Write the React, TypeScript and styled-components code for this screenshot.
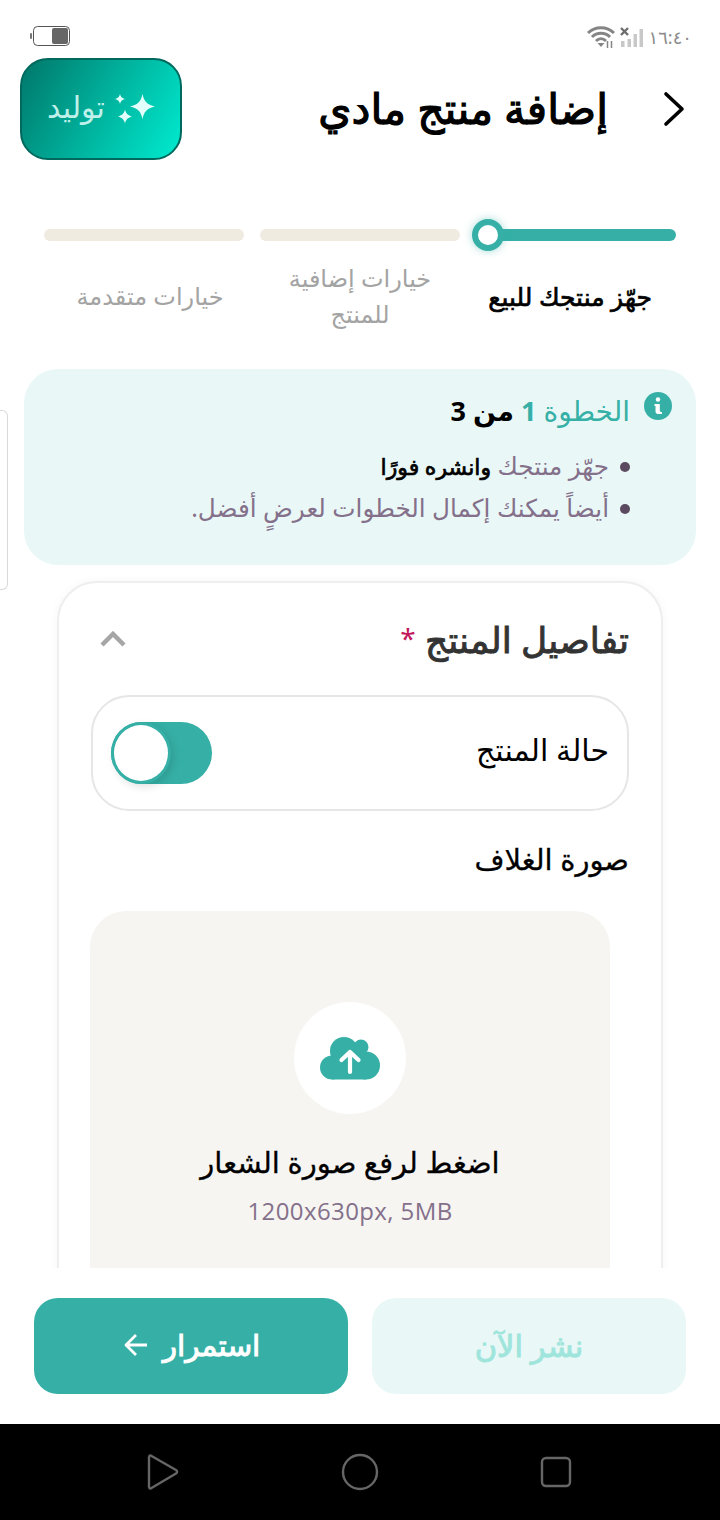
import React from 'react';
import styled, { createGlobalStyle, css } from 'styled-components';

const TEAL = '#36b0a6';
const AR_FONT = `"Noto Sans", "DejaVu Sans", sans-serif`;

// the Arabic bold face runs wide, so heavy text is the regular face with a stroke
const heavy = (stroke: number) => css`
  font-weight: 400;
  -webkit-text-stroke: ${stroke}px currentColor;
`;

const GlobalStyle = createGlobalStyle`
  html, body { margin: 0; padding: 0; background: #fff; }
  * { box-sizing: border-box; }
`;

const Screen = styled.div`
  position: relative;
  width: 720px;
  height: 1520px;
  display: flex;
  flex-direction: column;
  overflow: hidden;
  background: #fff;
  font-family: ${AR_FONT};
  color: #000;
`;

/* status bar */
const StatusBar = styled.div`
  direction: ltr;
  height: 58px;
  flex: none;
  display: flex;
  justify-content: space-between;
  align-items: flex-start;
  padding: 24px 28px 0 30px;
`;

const BatteryWrap = styled.div`
  margin-top: 2px;
  display: flex;
`;

const StatusRight = styled.div`
  display: flex;
  align-items: center;
  height: 26px;
  gap: 5px;
  color: #8c8c8c;
  font-size: 18px;
`;

/* header */
const Header = styled.header`
  flex: none;
  height: 102px;
  display: flex;
  align-items: center;
  padding: 0 34px 0 20px;
`;

const BackButton = styled.button`
  border: 0;
  background: none;
  padding: 0;
  width: 24px;
  height: 36px;
  margin-left: 54px;
  display: flex;
`;

const Title = styled.h1`
  margin: 0 0 2px;
  flex: 1;
  font-size: 42.500px;
  line-height: 50px;
  ${heavy(1.2)}
`;

const GenerateButton = styled.button`
  width: 162px;
  height: 102px;
  border-radius: 28px;
  border: 2px solid #00695e;
  background: linear-gradient(120deg, #00776a 0%, #00b8a2 55%, #00ebd0 100%);
  color: #bff0ea;
  font-family: ${AR_FONT};
  font-size: 30px;
  display: flex;
  align-items: center;
  justify-content: center;
  gap: 10px;
  padding: 0;

  span {
    padding-bottom: 6px;
  }
`;

/* stepper */
const Stepper = styled.div`
  flex: none;
  padding-top: 69px;
`;

const Tracks = styled.div`
  display: grid;
  grid-template-columns: repeat(3, 200px);
  column-gap: 16px;
  justify-content: center;
`;

const Track = styled.div<{ $active?: boolean }>`
  position: relative;
  height: 12px;
  border-radius: 6px;
  background: ${p => (p.$active ? TEAL : '#f0ebe1')};
`;

const Knob = styled.span`
  position: absolute;
  left: -4px;
  top: -10px;
  width: 32px;
  height: 32px;
  border-radius: 50%;
  background: #fff;
  border: 6px solid ${TEAL};
  box-shadow: 0 0 8px rgba(54, 176, 166, 0.45);
`;

const StepLabels = styled.div`
  display: grid;
  grid-template-columns: repeat(3, 210px);
  justify-content: center;
`;

const StepLabel = styled.div<{ $active?: boolean }>`
  height: 110px;
  display: flex;
  align-items: center;
  justify-content: center;
  text-align: center;
  font-size: ${p => (p.$active ? 25 : 24)}px;
  line-height: 36px;
  padding: 0 20px;
  color: ${p => (p.$active ? '#000' : '#a3a3a3')};
  white-space: ${p => (p.$active ? 'nowrap' : 'normal')};
  ${p => p.$active && heavy(0.7)}
`;

/* scrolling content */
const Content = styled.main`
  flex: 1;
  min-height: 0;
  overflow: hidden;
  padding: 18px 24px 0;
`;

const InfoBox = styled.section`
  height: 196px;
  border-radius: 34px;
  background: #e9f8f7;
  padding: 18px 24px 0;
`;

const InfoHeading = styled.div`
  display: flex;
  align-items: flex-start;
  gap: 14px;
  font-size: 27px;
  line-height: 46px;
  font-weight: 700;
`;

const InfoIcon = styled.span`
  width: 28px;
  height: 28px;
  flex: none;
  border-radius: 50%;
  background: ${TEAL};
  color: #fff;
  display: flex;
  align-items: center;
  justify-content: center;
  margin-top: 5px;
`;

const StepWord = styled.span`
  color: ${TEAL};
  font-size: 28px;
  font-weight: 400;
`;

const StepNumber = styled.span`
  color: ${TEAL};
`;

const BulletList = styled.ul`
  list-style: none;
  margin: 11px 0 0;
  padding: 0 63px 0 0;
  font-size: 24.700px;
  line-height: 42px;
  color: #84708a;
`;

const Bullet = styled.li`
  position: relative;
  height: 42px;
  white-space: nowrap;

  &::before {
    content: '';
    position: absolute;
    right: -21px;
    top: 17px;
    width: 10px;
    height: 10px;
    border-radius: 50%;
    background: #5c4b60;
  }

  b {
    color: #000;
    font-size: 22px;
    ${heavy(0.7)}
  }
`;

const Card = styled.section`
  margin: 16px 33px 0;
  height: 800px;
  border: 2px solid #eeeeee;
  border-radius: 40px;
  background: #fff;
  box-shadow: 0 0 10px rgba(0, 0, 0, 0.04);
  padding: 28px 32px 0 32px;
`;

const CardHead = styled.div`
  display: flex;
  align-items: center;
  justify-content: space-between;
  height: 56px;
  padding-left: 9px;
`;

const CardTitle = styled.h2`
  margin: 0;
  font-size: 36px;
  color: #333;
  line-height: 56px;
  ${heavy(0.9)}

  i {
    font-style: normal;
    font-size: 28px;
    vertical-align: 4px;
    color: #c2185b;
    -webkit-text-stroke: 0;
  }
`;

const StatusRow = styled.div`
  margin-top: 28px;
  height: 116px;
  border: 2px solid #e6e6e6;
  border-radius: 38px;
  display: flex;
  align-items: center;
  justify-content: space-between;
  padding: 0 18px 0 18px;
  font-size: 30px;

  > span {
    padding-bottom: 7px;
  }
`;

const Toggle = styled.div`
  position: relative;
  width: 101px;
  height: 62px;
  border-radius: 31px;
  background: ${TEAL};
`;

const ToggleThumb = styled.span`
  position: absolute;
  left: 0;
  top: 0;
  width: 60px;
  height: 62px;
  border-radius: 50%;
  background: #fff;
  border: 3px solid ${TEAL};
  box-shadow: 3px 3px 8px rgba(0, 0, 0, 0.12);
`;

const FieldLabel = styled.div`
  margin-top: 23px;
  font-size: 29px;
  line-height: 50px;
  -webkit-text-stroke: 0.3px #000;
`;

const Upload = styled.div`
  margin: 27px 19px 0 -1px;
  height: 420px;
  border-radius: 36px;
  background: #f6f5f2;
  display: flex;
  flex-direction: column;
  align-items: center;
  padding-top: 91px;
`;

const UploadCircle = styled.div`
  width: 112px;
  height: 112px;
  border-radius: 50%;
  background: #fff;
  display: flex;
  align-items: center;
  justify-content: center;
`;

const UploadTitle = styled.div`
  margin-top: 23px;
  margin-bottom: 1px;
  font-size: 29px;
  line-height: 50px;
  -webkit-text-stroke: 0.3px #000;
`;

const UploadHint = styled.div`
  direction: ltr;
  font-size: 24px;
  line-height: 46px;
  letter-spacing: 0.4px;
  color: #84708a;
  font-family: "Open Sans", "Noto Sans", sans-serif;
`;

/* sliver of a side tab at the edge of the screen */
const SideTab = styled.div`
  position: absolute;
  left: 0;
  top: 410px;
  width: 8px;
  height: 180px;
  border: 1px solid #d9d9d9;
  border-left: 0;
  border-radius: 0 6px 6px 0;
  background: #fff;
`;

/* footer actions */
const Footer = styled.footer`
  flex: none;
  height: 156px;
  background: #fff;
  display: grid;
  grid-template-columns: 314px 314px;
  column-gap: 24px;
  justify-content: center;
  padding-top: 30px;
`;

const ActionButton = styled.button<{ $primary?: boolean }>`
  height: 96px;
  border: 0;
  border-radius: 24px;
  font-family: ${AR_FONT};
  font-size: ${p => (p.$primary ? 29.5 : 30.5)}px;
  display: flex;
  align-items: center;
  justify-content: center;
  gap: 15px;
  padding: 0 0 3px ${p => (p.$primary ? 2 : 0)}px;
  background: ${p => (p.$primary ? TEAL : '#e9f8f7')};
  color: ${p => (p.$primary ? '#fff' : '#a0e5dc')};
  ${heavy(1)}
`;

/* android nav bar */
const NavBar = styled.nav`
  flex: none;
  direction: ltr;
  height: 96px;
  background: #000;
  display: flex;
  justify-content: space-between;
  align-items: center;
  padding: 0 148px 0 147px;
`;

const Battery = () => (
  <svg width="40" height="20" viewBox="0 0 40 20">
    <rect x="0" y="7" width="2" height="6" rx="1" fill="#777" />
    <rect x="3.500" y="0.500" width="36" height="19" rx="4" fill="#fff" stroke="#555" />
    <rect x="22" y="2" width="16" height="16" rx="2" fill="#666" />
  </svg>
);

const Wifi = () => (
  <svg width="28" height="22" viewBox="0 0 28 22" fill="none" stroke="#858585" strokeWidth="3">
    <path d="M1 7 C8 0 20 0 27 7" />
    <path d="M5 11 C10 6 18 6 23 11" />
    <path d="M9 15 C12 12 16 12 19 15" />
    <path d="M10.500 17 L14 21 L17.500 17 Z" fill="#858585" stroke="none" />
    <path d="M20.500 15 V22 M24.500 15 V22" strokeWidth="1.500" />
  </svg>
);

const Signal = () => (
  <svg width="24" height="20" viewBox="0 0 24 20" fill="#c8c8c8">
    <path d="M1 1 L8 8 M8 1 L1 8" stroke="#6e6e6e" strokeWidth="2.400" />
    <rect x="1" y="14" width="3.500" height="6" />
    <rect x="7.500" y="12" width="3.500" height="8" />
    <rect x="13.500" y="7" width="3.500" height="13" />
    <rect x="19.500" y="2" width="3.500" height="18" />
  </svg>
);

const Sparkles = () => (
  <svg width="40" height="30" viewBox="0 0 40 30" fill="#e2fffb">
    <path d="M27.500 0 C29 7.500 32 10.500 40 12.500 C32 14.500 29 17.500 27.500 25 C26 17.500 23 14.500 15 12.500 C23 10.500 26 7.500 27.500 0 Z" />
    <path d="M5 0 C5.500 2.700 7 4.300 10 5 C7 5.700 5.500 7.300 5 10 C4.500 7.300 3 5.700 0 5 C3 4.300 4.500 2.700 5 0 Z" />
    <path d="M10 15.500 C11 19.500 12.500 21 17 22.500 C12.500 24 11 25.500 10 29.500 C9 25.500 7.500 24 3 22.500 C7.500 21 9 19.500 10 15.500 Z" />
  </svg>
);

const BackChevron = () => (
  <svg width="24" height="36" viewBox="0 0 24 36" fill="none" stroke="#000" strokeWidth="3.600">
    <path d="M4 3 L20 18 L4 33" strokeLinecap="round" strokeLinejoin="round" />
  </svg>
);

const CollapseChevron = () => (
  <svg width="26" height="16" viewBox="0 0 26 16" fill="none" stroke="#a6a6a6" strokeWidth="4.500">
    <path d="M2 14 L13 3 L24 14" />
  </svg>
);

const InfoGlyph = () => (
  <svg width="10" height="18" viewBox="0 0 10 18" fill="#fff">
    <circle cx="5" cy="2.500" r="2.200" />
    <path d="M1.500 7 H6.800 V13 C6.800 14.500 7.500 15 9 15 V17 H5 C3.300 17 2.500 15.800 2.500 14 V9 H1.500 Z" />
  </svg>
);

const CloudUpload = () => (
  <svg width="60" height="43" viewBox="0 0 60 43">
    <g fill={TEAL}>
      <circle cx="12" cy="30.500" r="12" />
      <circle cx="24" cy="14" r="14" />
      <circle cx="41" cy="10" r="7.500" />
      <circle cx="46" cy="28.500" r="14" />
      <rect x="12" y="12" width="34" height="30.500" />
    </g>
    <path
      d="M30 35 V15 M21.500 23 L30 15 L38.500 23"
      fill="none"
      stroke="#fff"
      strokeWidth="4.200"
      strokeLinecap="round"
      strokeLinejoin="round"
    />
  </svg>
);

const ArrowLeft = () => (
  <svg width="24" height="24" viewBox="0 0 24 24" fill="none" stroke="#fff" strokeWidth="2.800">
    <path d="M23 12 H2 M12 2 L2 12 L12 22" strokeLinejoin="round" />
  </svg>
);

const NavBack = () => (
  <svg width="32" height="36" viewBox="0 0 32 36" fill="none" stroke="#666" strokeWidth="2.400">
    <path d="M2 3 C2 1.500 3.500 1 4.500 2 L29 16 C30.500 17 30.500 18.500 29 19.500 L4.500 34 C3.500 35 2 34.500 2 33 Z" strokeLinejoin="round" />
  </svg>
);

const NavHome = () => (
  <svg width="38" height="38" viewBox="0 0 38 38" fill="none" stroke="#666" strokeWidth="2.400">
    <circle cx="19" cy="19" r="17" />
  </svg>
);

const NavRecents = () => (
  <svg width="32" height="32" viewBox="0 0 32 32" fill="none" stroke="#666" strokeWidth="2.400">
    <rect x="2" y="2" width="28" height="28" rx="4" />
  </svg>
);

export default function App() {
  return (
    <Screen dir="rtl" lang="ar">
      <GlobalStyle />
      <StatusBar>
        <BatteryWrap>
          <Battery />
        </BatteryWrap>
        <StatusRight>
          <Wifi />
          <Signal />
          <span>١٦:٤٠</span>
        </StatusRight>
      </StatusBar>

      <Header>
        <BackButton aria-label="رجوع">
          <BackChevron />
        </BackButton>
        <Title>إضافة منتج مادي</Title>
        <GenerateButton>
          <Sparkles />
          <span>توليد</span>
        </GenerateButton>
      </Header>

      <Stepper>
        <Tracks>
          <Track $active>
            <Knob />
          </Track>
          <Track />
          <Track />
        </Tracks>
        <StepLabels>
          <StepLabel $active>جهّز منتجك للبيع</StepLabel>
          <StepLabel>خيارات إضافية للمنتج</StepLabel>
          <StepLabel>خيارات متقدمة</StepLabel>
        </StepLabels>
      </Stepper>

      <Content>
        <InfoBox>
          <InfoHeading>
            <InfoIcon>
              <InfoGlyph />
            </InfoIcon>
            <span>
              <StepWord>الخطوة</StepWord> <StepNumber>1</StepNumber> من 3
            </span>
          </InfoHeading>
          <BulletList>
            <Bullet>
              جهّز منتجك <b>وانشره فورًا</b>
            </Bullet>
            <Bullet>أيضاً يمكنك إكمال الخطوات لعرضٍ أفضل.</Bullet>
          </BulletList>
        </InfoBox>

        <Card>
          <CardHead>
            <CardTitle>
              تفاصيل المنتج <i>*</i>
            </CardTitle>
            <CollapseChevron />
          </CardHead>
          <StatusRow>
            <span>حالة المنتج</span>
            <Toggle>
              <ToggleThumb />
            </Toggle>
          </StatusRow>
          <FieldLabel>صورة الغلاف</FieldLabel>
          <Upload>
            <UploadCircle>
              <CloudUpload />
            </UploadCircle>
            <UploadTitle>اضغط لرفع صورة الشعار</UploadTitle>
            <UploadHint>1200x630px, 5MB</UploadHint>
          </Upload>
        </Card>
      </Content>

      <SideTab />

      <Footer>
        <ActionButton>نشر الآن</ActionButton>
        <ActionButton $primary>
          استمرار
          <ArrowLeft />
        </ActionButton>
      </Footer>

      <NavBar>
        <NavBack />
        <NavHome />
        <NavRecents />
      </NavBar>
    </Screen>
  );
}
